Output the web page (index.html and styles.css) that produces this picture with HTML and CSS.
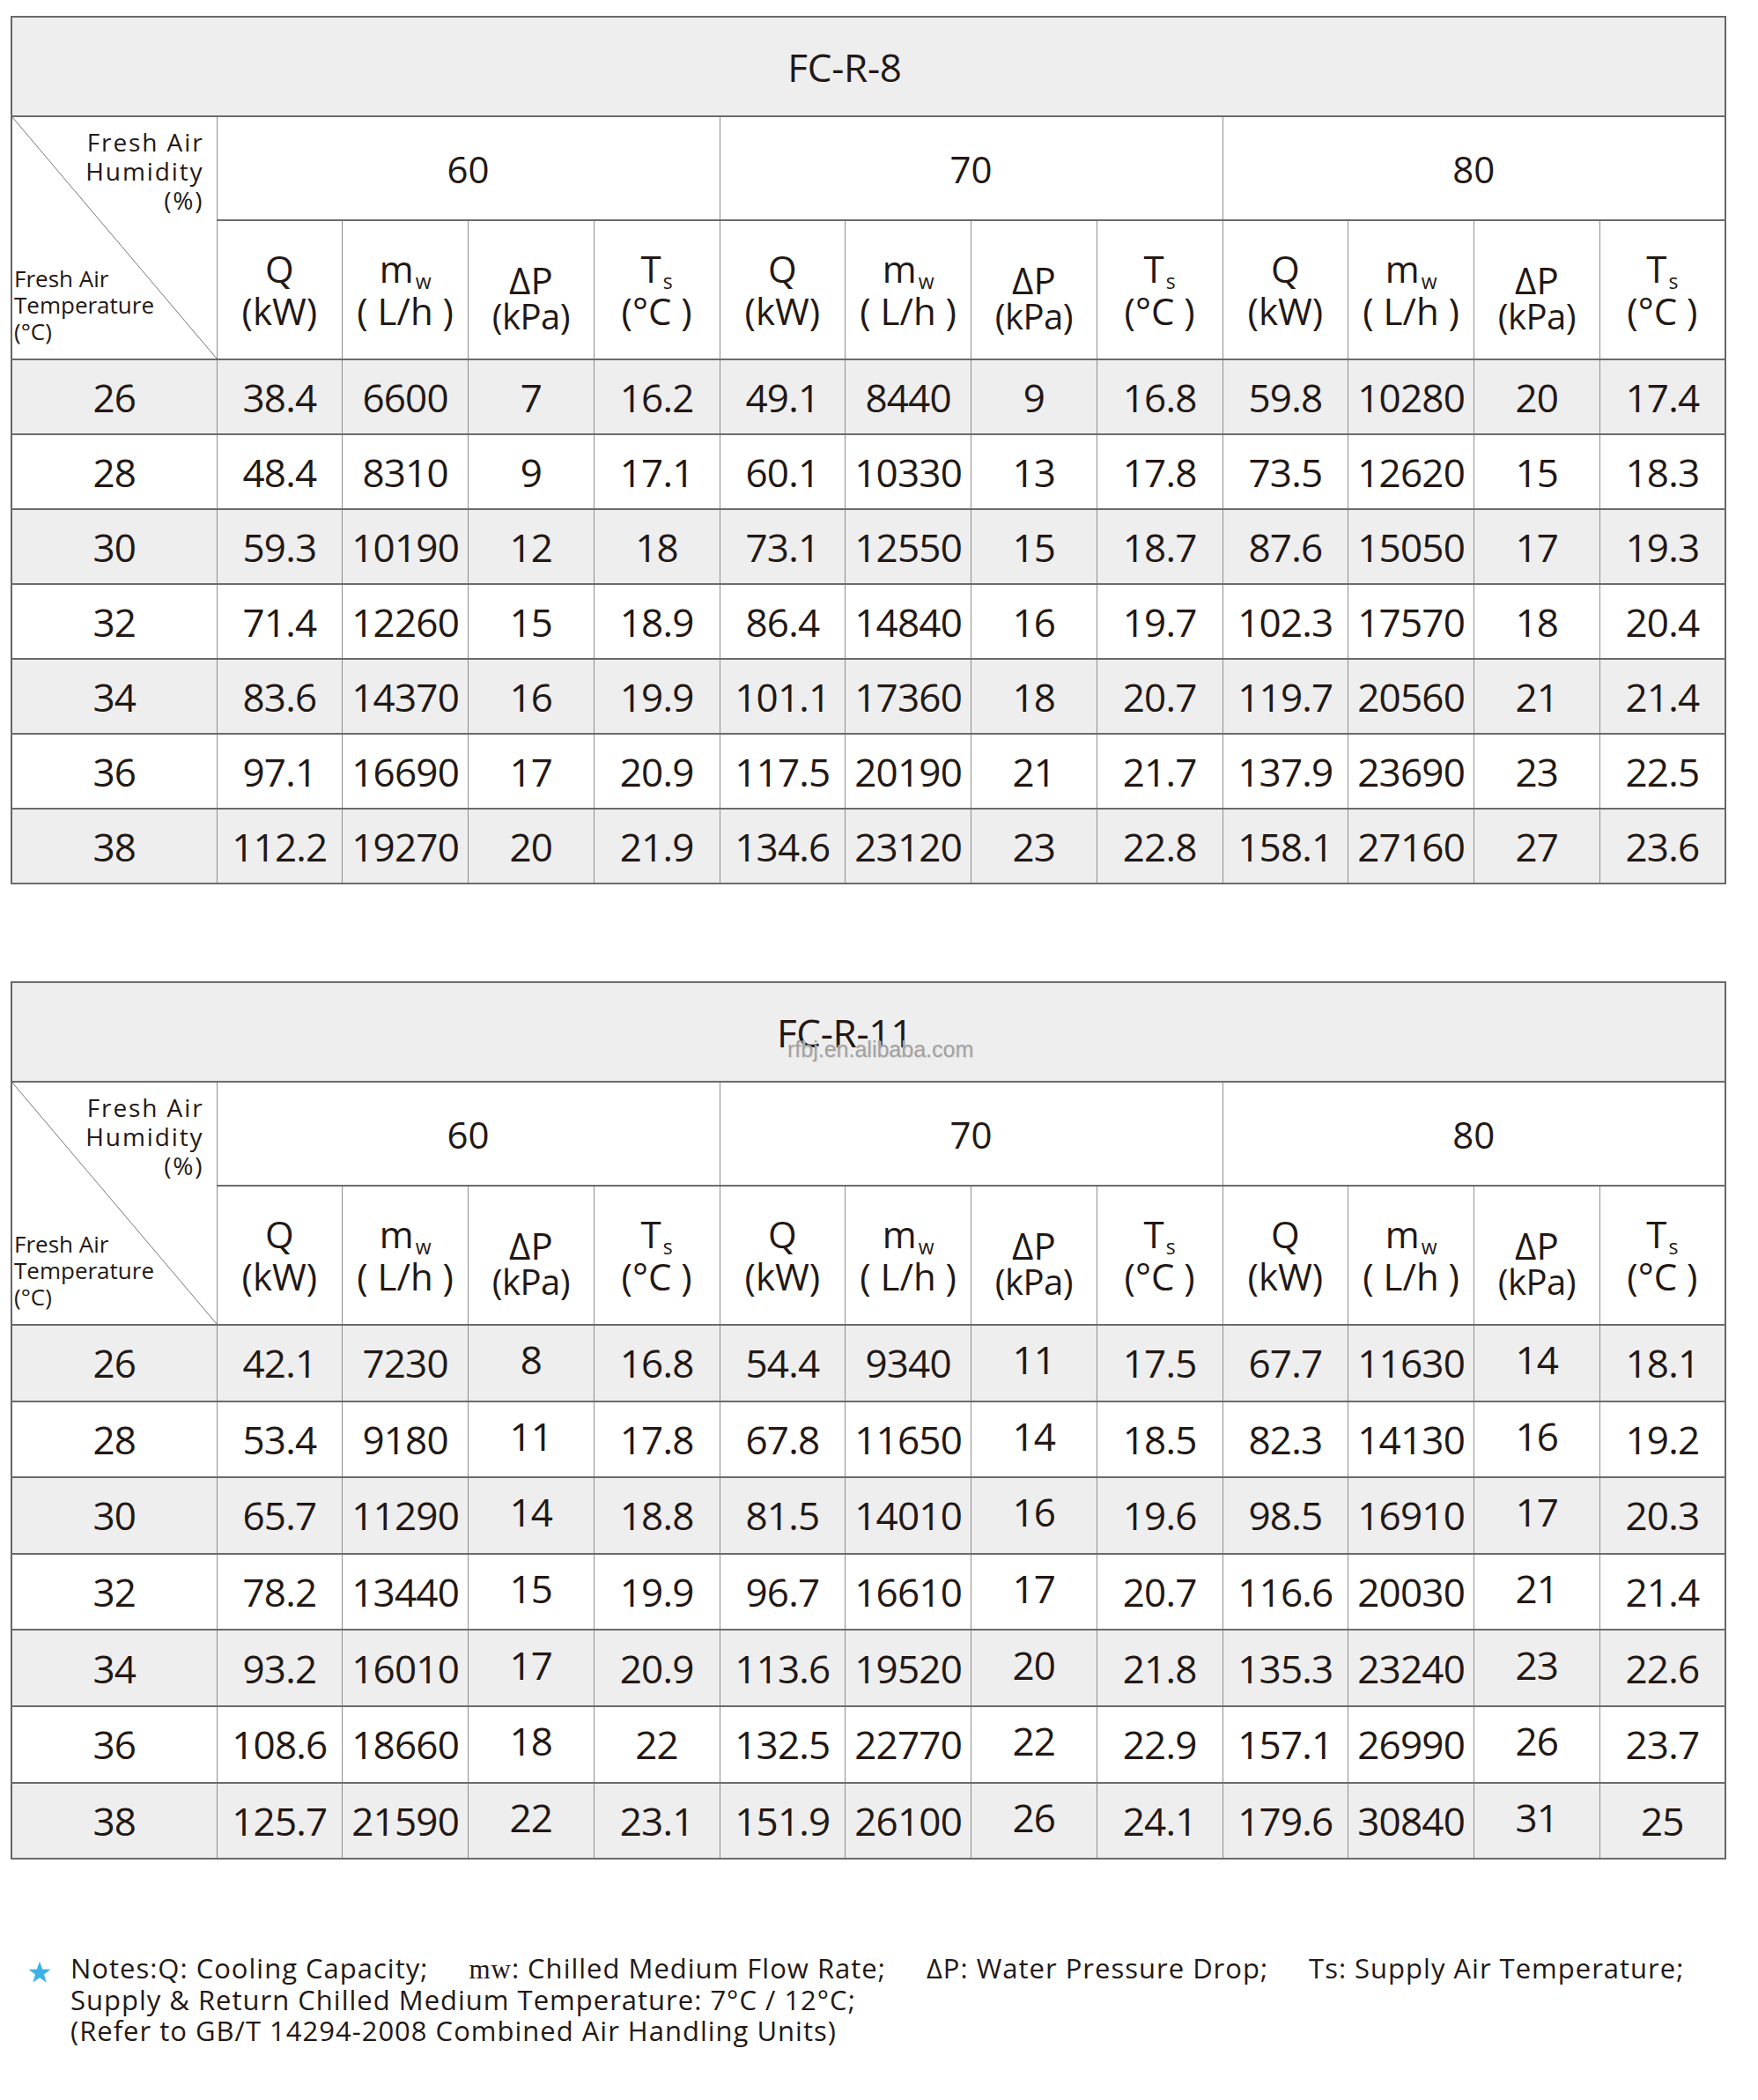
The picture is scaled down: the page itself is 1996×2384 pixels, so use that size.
FILE: index.html
```html
<!DOCTYPE html>
<html lang="en">

<head>
    <meta charset="UTF-8">
    <meta name="viewport" content="width=device-width, initial-scale=1.0">
    <title>FC-R Fresh Air Cooling Capacity</title>
    <link rel="stylesheet" href="styles.css">
</head>

<body>
    <div class="page">

        <table class="spec">
            <colgroup>
                <col class="col-first">
                <col span="12">
            </colgroup>
            <thead>
                <tr class="row-title">
                    <td class="title" colspan="13">FC-R-8</td>
                </tr>
                <tr class="row-hum">
                    <td class="corner" rowspan="2">
                        <div class="corner-box">
                            <div class="corner-top">Fresh Air<br>Humidity<br>(%)</div>
                            <div class="corner-bottom">Fresh Air<br>Temperature<br>(°C)</div>
                        </div>
                    </td>
                    <td class="group" colspan="4">60</td>
                    <td class="group" colspan="4">70</td>
                    <td class="group" colspan="4">80</td>
                </tr>
                <tr class="row-head">
                    <td class="unit"><span class="sym">Q</span><span class="dim">(kW)</span></td>
                    <td class="unit"><span class="sym">m<sub>w</sub></span><span class="dim">( L/h )</span></td>
                    <td class="unit dp"><span class="sym">ΔP</span><span class="dim">(kPa)</span></td>
                    <td class="unit"><span class="sym">T<sub>s</sub></span><span class="dim">(°C )</span></td>
                    <td class="unit"><span class="sym">Q</span><span class="dim">(kW)</span></td>
                    <td class="unit"><span class="sym">m<sub>w</sub></span><span class="dim">( L/h )</span></td>
                    <td class="unit dp"><span class="sym">ΔP</span><span class="dim">(kPa)</span></td>
                    <td class="unit"><span class="sym">T<sub>s</sub></span><span class="dim">(°C )</span></td>
                    <td class="unit"><span class="sym">Q</span><span class="dim">(kW)</span></td>
                    <td class="unit"><span class="sym">m<sub>w</sub></span><span class="dim">( L/h )</span></td>
                    <td class="unit dp"><span class="sym">ΔP</span><span class="dim">(kPa)</span></td>
                    <td class="unit"><span class="sym">T<sub>s</sub></span><span class="dim">(°C )</span></td>
                </tr>
            </thead>
            <tbody>
                <tr><td>26</td><td>38.4</td><td>6600</td><td>7</td><td>16.2</td><td>49.1</td><td>8440</td><td>9</td><td>16.8</td><td>59.8</td><td>10280</td><td>20</td><td>17.4</td></tr>
                <tr><td>28</td><td>48.4</td><td>8310</td><td>9</td><td>17.1</td><td>60.1</td><td>10330</td><td>13</td><td>17.8</td><td>73.5</td><td>12620</td><td>15</td><td>18.3</td></tr>
                <tr><td>30</td><td>59.3</td><td>10190</td><td>12</td><td>18</td><td>73.1</td><td>12550</td><td>15</td><td>18.7</td><td>87.6</td><td>15050</td><td>17</td><td>19.3</td></tr>
                <tr><td>32</td><td>71.4</td><td>12260</td><td>15</td><td>18.9</td><td>86.4</td><td>14840</td><td>16</td><td>19.7</td><td>102.3</td><td>17570</td><td>18</td><td>20.4</td></tr>
                <tr><td>34</td><td>83.6</td><td>14370</td><td>16</td><td>19.9</td><td>101.1</td><td>17360</td><td>18</td><td>20.7</td><td>119.7</td><td>20560</td><td>21</td><td>21.4</td></tr>
                <tr><td>36</td><td>97.1</td><td>16690</td><td>17</td><td>20.9</td><td>117.5</td><td>20190</td><td>21</td><td>21.7</td><td>137.9</td><td>23690</td><td>23</td><td>22.5</td></tr>
                <tr><td>38</td><td>112.2</td><td>19270</td><td>20</td><td>21.9</td><td>134.6</td><td>23120</td><td>23</td><td>22.8</td><td>158.1</td><td>27160</td><td>27</td><td>23.6</td></tr>
            </tbody>
        </table>

        <table class="spec spec-tall">
            <colgroup>
                <col class="col-first">
                <col span="12">
            </colgroup>
            <thead>
                <tr class="row-title">
                    <td class="title" colspan="13">FC-R-11<span class="watermark">rfbj.en.alibaba.com</span></td>
                </tr>
                <tr class="row-hum">
                    <td class="corner" rowspan="2">
                        <div class="corner-box">
                            <div class="corner-top">Fresh Air<br>Humidity<br>(%)</div>
                            <div class="corner-bottom">Fresh Air<br>Temperature<br>(°C)</div>
                        </div>
                    </td>
                    <td class="group" colspan="4">60</td>
                    <td class="group" colspan="4">70</td>
                    <td class="group" colspan="4">80</td>
                </tr>
                <tr class="row-head">
                    <td class="unit"><span class="sym">Q</span><span class="dim">(kW)</span></td>
                    <td class="unit"><span class="sym">m<sub>w</sub></span><span class="dim">( L/h )</span></td>
                    <td class="unit dp"><span class="sym">ΔP</span><span class="dim">(kPa)</span></td>
                    <td class="unit"><span class="sym">T<sub>s</sub></span><span class="dim">(°C )</span></td>
                    <td class="unit"><span class="sym">Q</span><span class="dim">(kW)</span></td>
                    <td class="unit"><span class="sym">m<sub>w</sub></span><span class="dim">( L/h )</span></td>
                    <td class="unit dp"><span class="sym">ΔP</span><span class="dim">(kPa)</span></td>
                    <td class="unit"><span class="sym">T<sub>s</sub></span><span class="dim">(°C )</span></td>
                    <td class="unit"><span class="sym">Q</span><span class="dim">(kW)</span></td>
                    <td class="unit"><span class="sym">m<sub>w</sub></span><span class="dim">( L/h )</span></td>
                    <td class="unit dp"><span class="sym">ΔP</span><span class="dim">(kPa)</span></td>
                    <td class="unit"><span class="sym">T<sub>s</sub></span><span class="dim">(°C )</span></td>
                </tr>
            </thead>
            <tbody>
                <tr><td>26</td><td>42.1</td><td>7230</td><td class="dp-val">8</td><td>16.8</td><td>54.4</td><td>9340</td><td class="dp-val">11</td><td>17.5</td><td>67.7</td><td>11630</td><td class="dp-val">14</td><td>18.1</td></tr>
                <tr><td>28</td><td>53.4</td><td>9180</td><td class="dp-val">11</td><td>17.8</td><td>67.8</td><td>11650</td><td class="dp-val">14</td><td>18.5</td><td>82.3</td><td>14130</td><td class="dp-val">16</td><td>19.2</td></tr>
                <tr><td>30</td><td>65.7</td><td>11290</td><td class="dp-val">14</td><td>18.8</td><td>81.5</td><td>14010</td><td class="dp-val">16</td><td>19.6</td><td>98.5</td><td>16910</td><td class="dp-val">17</td><td>20.3</td></tr>
                <tr><td>32</td><td>78.2</td><td>13440</td><td class="dp-val">15</td><td>19.9</td><td>96.7</td><td>16610</td><td class="dp-val">17</td><td>20.7</td><td>116.6</td><td>20030</td><td class="dp-val">21</td><td>21.4</td></tr>
                <tr><td>34</td><td>93.2</td><td>16010</td><td class="dp-val">17</td><td>20.9</td><td>113.6</td><td>19520</td><td class="dp-val">20</td><td>21.8</td><td>135.3</td><td>23240</td><td class="dp-val">23</td><td>22.6</td></tr>
                <tr><td>36</td><td>108.6</td><td>18660</td><td class="dp-val">18</td><td>22</td><td>132.5</td><td>22770</td><td class="dp-val">22</td><td>22.9</td><td>157.1</td><td>26990</td><td class="dp-val">26</td><td>23.7</td></tr>
                <tr><td>38</td><td>125.7</td><td>21590</td><td class="dp-val">22</td><td>23.1</td><td>151.9</td><td>26100</td><td class="dp-val">26</td><td>24.1</td><td>179.6</td><td>30840</td><td class="dp-val">31</td><td>25</td></tr>
            </tbody>
        </table>

        <div class="notes">
            <svg class="star" viewBox="0 0 24 24" width="28" height="28">
                <path d="M12 1.5l2.7 7.6 8 .2-6.4 4.9 2.3 7.7L12 17.3l-6.6 4.6 2.3-7.7L1.3 9.3l8-.2z" fill="#3bb3e8"/>
            </svg>
            <p class="notes-text">Notes:Q: Cooling Capacity;<span class="gap"></span><span class="mw">mw</span>: Chilled Medium Flow Rate;<span class="gap"></span>ΔP: Water Pressure Drop;<span class="gap"></span>Ts: Supply Air Temperature;<br>Supply &amp; Return Chilled Medium Temperature: 7°C / 12°C;<br>(Refer to GB/T 14294-2008 Combined Air Handling Units)</p>
        </div>

    </div>
</body>

</html>
```

FILE: styles.css
```css
body {
    margin: 0;
    background-color: #fff;
    color: #231815;
    font-family: 'Open Sans', 'Noto Sans', 'DejaVu Sans', sans-serif;
}

.page {
    padding: 18px 36px 40px 12px;
}

/* spec tables */

.spec {
    width: 1948px;
    border-collapse: collapse;
    table-layout: fixed;
    border: 2px solid #666;
}

.spec + .spec {
    margin-top: 110px;
}

.col-first {
    width: 233px;
}

.spec td {
    padding: 0;
    text-align: center;
    vertical-align: middle;
    border-top: 2px solid #6b6b6b;
    border-bottom: 2px solid #6b6b6b;
    border-left: 1px solid #8e8e8e;
    border-right: 1px solid #8e8e8e;
}

.row-title {
    height: 113px;
}

.title {
    position: relative;
    background-color: #eee;
    font-size: 44px;
    letter-spacing: -0.3px;
    padding-right: 54px !important;
}

.watermark {
    position: absolute;
    left: 880px;
    top: 63px;
    font-family: 'Liberation Sans', Arial, sans-serif;
    font-size: 25px;
    line-height: 25px;
    letter-spacing: 0;
    color: #a2a2a2;
    text-shadow: 1px 1px 1px #d6d6d6;
}

.row-hum {
    height: 118px;
}

.group {
    font-size: 42px;
}

.row-head {
    height: 158px;
}

.corner {
    vertical-align: top !important;
    background: linear-gradient(to top right, transparent calc(50% - 0.8px), #7a7a7a 50%, transparent calc(50% + 0.8px));
}

.corner-box {
    height: 272px;
    box-sizing: border-box;
    padding: 12px 14px 14px 2px;
    display: flex;
    flex-direction: column;
    justify-content: space-between;
}

.corner-top {
    text-align: right;
    font-size: 28px;
    line-height: 33px;
    letter-spacing: 1.9px;
}

.corner-bottom {
    text-align: left;
    font-size: 26px;
    line-height: 30px;
}

.unit {
    font-size: 42px;
    line-height: 48px;
}

.unit .sym,
.unit .dim {
    display: block;
}

.unit sub {
    font-size: 23px;
    line-height: 0;
    vertical-align: -7px;
    margin-left: 2px;
}

.unit.dp {
    padding-top: 20px;
}

.dp .sym {
    line-height: 40px;
}

.dp .dim {
    font-size: 40px;
    line-height: 42px;
    letter-spacing: -0.5px;
}

.spec tbody tr {
    height: 85px;
}

.spec-tall tbody tr {
    height: 86.6px;
}

.spec tbody td {
    font-size: 44px;
    line-height: 1;
    letter-spacing: -0.8px;
}

.spec tbody tr:nth-child(odd) td {
    background-color: #eee;
}

.spec-tall .dp-val {
    padding-bottom: 8px;
}

/* notes */

.notes {
    display: flex;
    align-items: flex-start;
    margin-top: 106px;
}

.star {
    flex: none;
    margin: 8px 21px 0 19px;
}

.notes-text {
    margin: 0;
    font-size: 31px;
    line-height: 35px;
    letter-spacing: 1px;
}

.gap {
    display: inline-block;
    width: 46px;
}

.mw {
    font-family: 'Liberation Serif', 'Times New Roman', serif;
}
```
